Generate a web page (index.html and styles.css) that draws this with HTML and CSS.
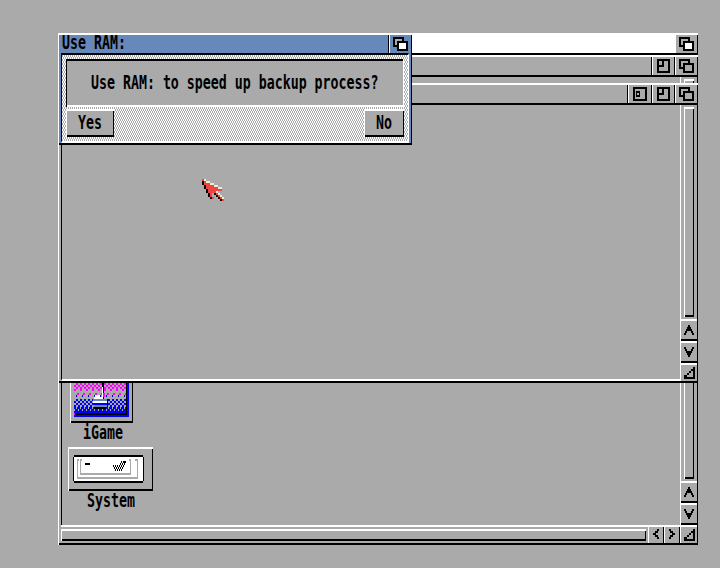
FILE: index.html
```html
<!DOCTYPE html>
<html lang="en">
<head>
<meta charset="utf-8">
<title>Workbench</title>
<link rel="stylesheet" href="styles.css">
</head>
<body>
<svg class="defs" width="0" height="0" aria-hidden="true">
  <symbol id="depth" viewBox="0 0 15 14"><path fill="#aaa" stroke="#000" stroke-width="2" d="M1 1H10V9H1Z"/><path stroke="#000" stroke-width="2" d="M5 5H14V13H5Z"/></symbol>
  <symbol id="zoom" viewBox="0 0 13 14"><path fill="none" stroke="#000" stroke-width="2" d="M1 1H12V13H1ZM6 1V7H1"/></symbol>
  <symbol id="iconify" viewBox="0 0 14 14"><path fill="none" stroke="#000" stroke-width="2" d="M1 1H13V13H1Z"/><path fill="#000" fill-rule="evenodd" d="M3 4h4v6H3zM4 6v2h2V6z"/></symbol>
  <symbol id="up" viewBox="0 0 10 10"><path d="M4 0h2v2h1v2h1v2h1v2h1v2H8V8H7V6H3v2H2v2H0V8h1V6h1V4h1V2h1z"/></symbol>
  <symbol id="down" viewBox="0 0 10 10"><path d="M0 0h2v2h1v2h4V2h1V0h2v2H9v2H8v2H7v2H6v2H4V8H3V6H2V4H1V2H0z"/></symbol>
  <symbol id="left" viewBox="0 0 6 10"><path d="M4 0h2v2H5v2H3v2h2v2h1v2H4V8H2V6H0V4h2V2h2z"/></symbol>
  <symbol id="right" viewBox="0 0 6 10"><path d="M0 0h2v2h2v2h2v2H4v2H2v2H0V8h1V6h2V4H1V2H0z"/></symbol>
  <symbol id="size" viewBox="0 0 11 12"><path d="M9 0h2v12H0V8h1v2h8zM7 2h2v2H7zM5 4h2v2H5zM3 6h2v2H3zM1 8h2v2H1z"/></symbol>
</svg>

<div class="screenbar"><div class="gadget depth screen"><svg width="15" height="14"><use href="#depth"/></svg></div></div>

<section class="window drawer">
  <header class="title">
    <div class="gadget zoom"><svg width="13" height="14"><use href="#zoom"/></svg></div>
    <div class="gadget back"><svg width="15" height="14"><use href="#depth"/></svg></div>
  </header>
  <div class="middle">
    <div class="content icons">
      <figure class="icon igame">
        <div class="plate">
          <svg width="55" height="56" viewBox="0 0 55 56">
            <defs>
              <pattern id="pink" width="4" height="4" patternUnits="userSpaceOnUse"><path fill="#f0f" d="M0 0h2v2H0zM2 2h2v2H2z"/></pattern>
              <pattern id="pinkfew" width="6" height="8" patternUnits="userSpaceOnUse"><path fill="#f0f" d="M0 4h2v2H0zM3 0h2v2H3z"/></pattern>
              <pattern id="bluefew" width="6" height="8" patternUnits="userSpaceOnUse"><path fill="#00f" d="M2 2h1v2H2zM5 6h1v2H5z"/></pattern>
              <pattern id="blue" width="4" height="4" patternUnits="userSpaceOnUse"><path fill="#00f" d="M0 0h2v2H0zM2 2h2v2H2z"/></pattern>
              <pattern id="bluemost" width="4" height="4" patternUnits="userSpaceOnUse"><path fill="#00f" d="M0 0h4v4H0z"/><path fill="#aaa" d="M0 0h1v2H0zM2 2h1v2H2z"/></pattern>
            </defs>
            <path fill="#f0f" d="M0 0h53v20H0z"/>
            <path fill="url(#pink)" d="M0 20h53v8H0z"/>
            <path fill="url(#pinkfew)" d="M0 28h53v6H0z"/>
            <path fill="url(#bluefew)" d="M0 34h53v4H0z"/>
            <path fill="url(#blue)" d="M0 38h53v8H0z"/>
            <path fill="url(#bluemost)" d="M0 46h53v4H0z"/>
            <path fill="#00f" d="M0 50h53v2H0zM53 0h2v56H0v-2h53z"/>
            <path d="M52 0h1v54H1v-2h51z"/>
            <path fill="#f0f" d="M0 52h1v2H0z"/>
            <path d="M28 22h2v4h-2zM29 26h1v12h-1z"/>
            <path fill="#fff" d="M28 26h1v10h-1zM21 34h5v2h-5zM20 36h9v2h-9z"/>
            <path fill="#f0f" d="M29 32h2v4h-2z"/>
            <path fill="#68b" d="M19 38h15v2H19zM20 44h13v2H20z"/>
            <path fill="#fff" d="M19 40h14v4H19z"/>
            <path fill="#00f" d="M19 42h14v2H19z"/>
            <path d="M33 38h1v8h-1zM20 46h12v2H20z"/>
          </svg>
        </div>
        <figcaption><span class="type">iGame</span></figcaption>
      </figure>
      <figure class="icon system">
        <div class="plate">
          <svg width="71" height="28" viewBox="0 0 71 28">
            <path d="M1 0h69v2h1v24h-1v2H1v-2H0V2h1z"/>
            <path fill="#fff" d="M1 2h69v24H1z"/>
            <path fill="#aaa" d="M4 4h2v2H5v16h59V6h-2V4h3v20H4zM7 4h2v2H8v12h49V6h-1V4h2v16H7z"/>
            <path d="M12 8h5v2h-5z"/>
            <path d="M48 6h1v2h-1zM50 6h3v2h-3zM40 10h1v2h-1zM42 10h1v2h-1zM47 8h1v2h-1zM49 8h1v2h-1zM51 8h1v2h-1zM44 10h1v2h-1zM46 10h1v2h-1zM48 10h1v2h-1zM50 10h1v2h-1zM41 12h1v2h-1zM43 12h1v2h-1zM45 12h1v2h-1zM47 12h1v2h-1zM49 12h1v2h-1zM42 14h1v2h-1zM44 14h1v2h-1zM46 14h1v2h-1zM48 14h1v2h-1z"/>
          </svg>
        </div>
        <figcaption><span class="type">System</span></figcaption>
      </figure>
    </div>
    <aside class="vbar">
      <div class="track"><div class="knob"></div></div>
      <div class="arrow"><svg width="10" height="10"><use href="#up"/></svg></div>
      <div class="arrow"><svg width="10" height="10"><use href="#down"/></svg></div>
    </aside>
  </div>
  <footer class="hbar">
    <div class="htrack"></div>
    <div class="harrow"><svg width="6" height="10"><use href="#left"/></svg></div>
    <div class="harrow"><svg width="6" height="10"><use href="#right"/></svg></div>
    <div class="corner"><svg width="11" height="12"><use href="#size"/></svg></div>
  </footer>
</section>

<section class="window front-window">
  <header class="title">
    <div class="gadget iconify"><svg width="14" height="14"><use href="#iconify"/></svg></div>
    <div class="gadget zoom"><svg width="13" height="14"><use href="#zoom"/></svg></div>
    <div class="gadget back"><svg width="15" height="14"><use href="#depth"/></svg></div>
  </header>
  <div class="middle">
    <div class="content"></div>
    <aside class="vbar">
      <div class="track"><div class="knob"></div></div>
      <div class="arrow"><svg width="10" height="10"><use href="#up"/></svg></div>
      <div class="arrow"><svg width="10" height="10"><use href="#down"/></svg></div>
      <div class="vcorner"><svg width="11" height="12"><use href="#size"/></svg></div>
    </aside>
  </div>
</section>

<section class="dialog">
  <header class="dialog-title">
    <h1><span class="type">Use RAM:</span></h1>
    <div class="gadget depth"><svg width="15" height="14"><use href="#depth"/></svg></div>
  </header>
  <div class="dialog-body">
    <p class="message"><span class="type">Use RAM: to speed up backup process?</span></p>
    <div class="actions">
      <button class="yes"><span class="type">Yes</span></button>
      <button class="no"><span class="type">No</span></button>
    </div>
  </div>
</section>

<svg class="pointer" width="22" height="22" viewBox="0 0 11 11">
  <path d="M0 1h1v2H0zM1 3h1v2H1zM2 5h1v2H2zM3 7h1v2H3zM4 9h1v1H4zM6 7h1v1H6zM7 8h1v1H7zM8 9h1v1H8zM9 10h1v1H9z"/>
  <path fill="#eec" d="M1 0h1v1H1zM2 1h2v1H2zM4 2h2v1H4zM6 3h2v1H6zM8 4h2v1H8zM7 6h1v1H7zM8 7h1v1H8zM9 8h1v1H9zM10 9h1v1h-1z"/>
  <path fill="#e44" d="M0 0h1v1h1v1h2v1h2v1h2v1h2v1H7v1h1v1h1v1h1v1h1v1h-1v-1H9V9H8V8H7V7H5v2h1v1H5V9H4V7H3V5H2V3H1V1H0z"/>
</svg>
</body>
</html>
```
FILE: styles.css
```css
* { box-sizing: border-box; }

body {
  position: relative;
  width: 720px;
  height: 568px;
  margin: 0;
  overflow: hidden;
  background: #aaa;
  color: #000;
  font: bold 13.289px/16px "DejaVu Sans Mono", monospace;
}

h1, p, figure { margin: 0; font: inherit; }
svg { display: block; shape-rendering: crispEdges; }
.defs { position: absolute; }

.type {
  display: inline-block;
  white-space: pre;
  transform: scaleY(1.42);
}

/* Raised edges: one pixel wide, two pixels high */
.window, .dialog, .knob, .htrack, button, .plate {
  box-shadow: inset 1px 0 #fff, inset 0 2px #fff, inset -1px 0 #000, inset 0 -2px #000;
}

.screenbar {
  position: absolute;
  left: 58px;
  top: 33px;
  width: 640px;
  height: 22px;
  display: flex;
  justify-content: flex-end;
  background: #fff;
  border-bottom: 2px solid #000;
}

.gadget {
  padding: 2px 0 0 3px;
  border-left: 1px solid #fff;
  box-shadow: -1px 0 #000;
  fill: #aaa;
}
.iconify { width: 24px; padding-left: 4px; }
.zoom { width: 23px; padding-left: 4px; }
.back { width: 22px; }
.depth { width: 22px; fill: #fff; }
.screen {
  height: 18px;
  margin-top: 2px;
  border-left: 0;
  border-right: 1px solid #000;
  background: #aaa;
  box-shadow: none;
}

.window {
  position: absolute;
  left: 58px;
  width: 640px;
  display: flex;
  flex-direction: column;
  padding: 2px 1px 2px 3px;
  background: #aaa;
}
.drawer { top: 55px; height: 490px; }
.front-window { top: 83px; height: 300px; }

.title {
  display: flex;
  justify-content: flex-end;
  flex: 0 0 20px;
  margin-left: -2px;
  border-bottom: 2px solid #000;
}
.middle { display: flex; flex: 1; min-height: 0; }
.drawer .middle { border-bottom: 2px solid #fff; }
.content { flex: 1; border-left: 1px solid #000; }
.front-window .content { border-bottom: 2px solid #fff; }

.vbar {
  width: 17px;
  display: flex;
  flex-direction: column;
  border-left: 1px solid #fff;
}
.track { flex: 1; padding: 2px 3px; }
.knob { width: 10px; height: 100%; }
.arrow {
  height: 22px;
  padding: 4px 0 0 3px;
  border-top: 2px solid #fff;
  border-bottom: 2px solid #000;
}
.vcorner { height: 18px; padding: 2px 0 0 3px; border-top: 2px solid #fff; }

.hbar { display: flex; height: 16px; }
.htrack { flex: 1; height: 12px; margin: 2px 2px 0 0; }
.harrow {
  width: 16px;
  padding: 2px 0 0 4px;
  border-left: 1px solid #fff;
  border-right: 1px solid #000;
}
.corner { width: 17px; padding: 2px 0 0 3px; border-left: 1px solid #fff; }

.icons { display: flex; flex-direction: column; justify-content: flex-end; padding: 0 0 13px 6px; }
.icon { flex: none; }
.igame { width: 63px; margin-left: 2px; }
.plate { background: #aaa; }
.igame .plate { height: 62px; padding: 0 4px 6px; }
.igame figcaption { height: 24px; padding: 2px 0 0 13px; }
.system .plate { width: 85px; height: 44px; padding: 8px 5px; }
.system figcaption { height: 21px; padding: 2px 0 0 19px; }

.dialog {
  position: absolute;
  left: 58px;
  top: 33px;
  width: 354px;
  height: 112px;
  padding: 2px 1px;
  background: #68b;
}
.dialog-title { display: flex; height: 18px; }
.dialog-title h1 { flex: 1; padding-left: 3px; }
.dialog-body {
  height: 90px;
  margin: 0 2px;
  padding: 4px 4px 0;
  border: solid;
  border-width: 2px 1px 2px;
  border-color: #000 #fff #fff #000;
  background: repeating-conic-gradient(#fff 0 25%, #aaa 0 50%) 0 0 / 2px 4px;
}
.message {
  height: 48px;
  padding: 16px 0 0 25px;
  background: #aaa;
  box-shadow: inset 1px 0 #000, inset -1px 0 #fff, inset 0 2px #000, inset 0 -2px #fff;
}
.actions { display: flex; justify-content: space-between; margin-top: 2px; }
button {
  height: 28px;
  padding: 0;
  border: 0;
  background: #aaa;
  color: #000;
  font: inherit;
}
.yes { width: 48px; }
.no { width: 40px; }

.pointer { position: absolute; left: 202px; top: 179px; }
```
